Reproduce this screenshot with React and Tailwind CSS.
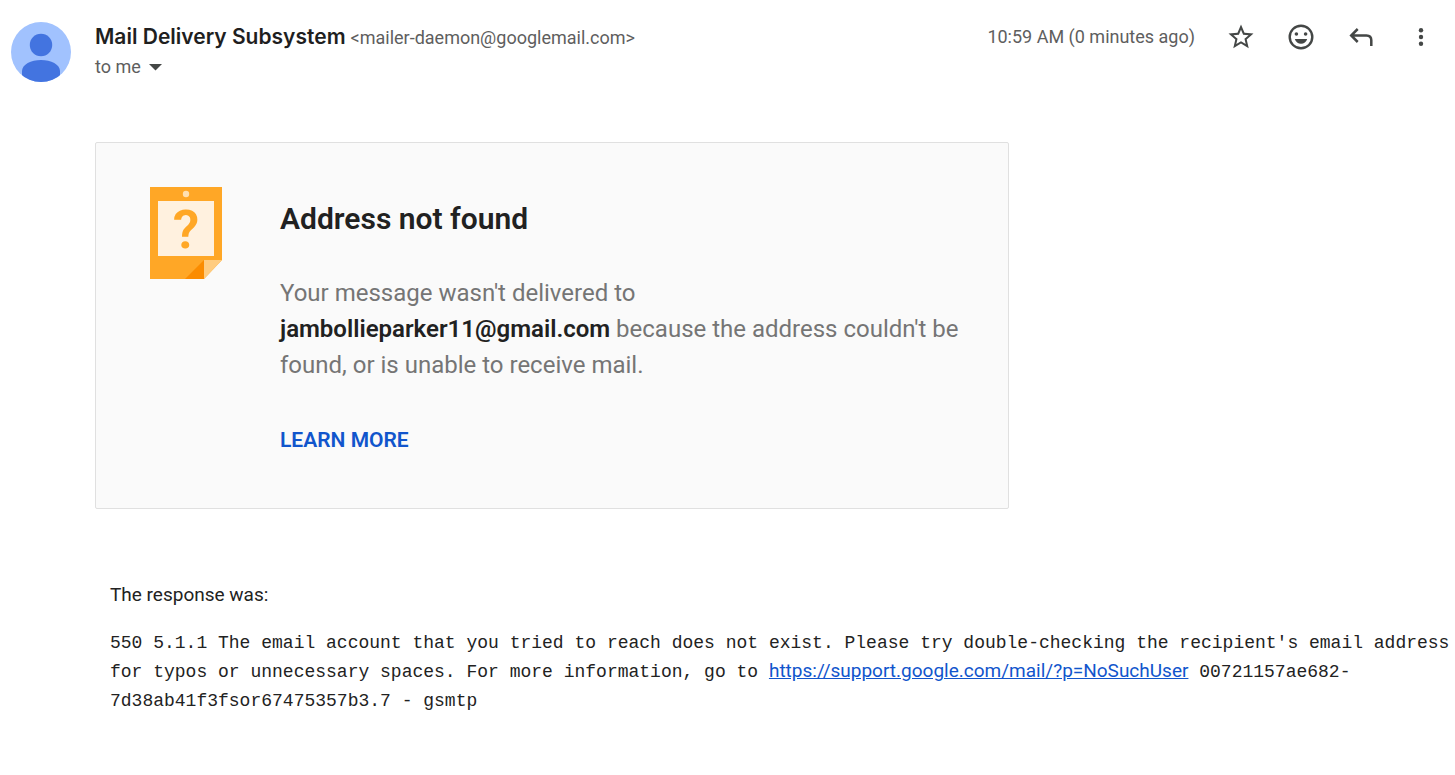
import React from 'react';
import { MdStarBorder } from 'react-icons/md';

const Avatar = () => (
  <svg className="w-15 h-15 shrink-0" viewBox="0 0 60 60" role="img" aria-label="Sender">
    <clipPath id="avatar-clip">
      <circle cx="30" cy="30" r="30" />
    </clipPath>
    <g clipPath="url(#avatar-clip)">
      <rect width="60" height="60" fill="#a1c2fe" />
      <circle cx="30" cy="23" r="11.2" fill="#4374e0" />
      <path d="M11 60V49c0-6.500 9-11 19-11s19 4.500 19 11v11z" fill="#4374e0" />
    </g>
  </svg>
);

const SmileIcon = () => (
  <svg width="30" height="30" viewBox="0 0 30 30" fill="#444746">
    <circle cx="15" cy="15" r="11.300" fill="none" stroke="#444746" strokeWidth="2.400" />
    <circle cx="10.400" cy="12" r="1.800" />
    <circle cx="19.600" cy="12" r="1.800" />
    <path d="M8.800 17H21.200C20.300 20 17.900 21.800 15 21.800S9.700 20 8.800 17z" />
  </svg>
);

const ReplyIcon = () => (
  <svg width="30" height="30" viewBox="0 0 30 30" fill="none" stroke="#444746" strokeWidth="2.500">
    <path d="M11.700 7L5.200 13.500L11.700 20M5.500 13.500H20.500Q25.300 13.500 25.300 18.300V24" />
  </svg>
);

const MoreIcon = () => (
  <svg width="30" height="30" viewBox="0 0 30 30" fill="#444746">
    <circle cx="15" cy="8.200" r="2.200" />
    <circle cx="15" cy="15" r="2.200" />
    <circle cx="15" cy="21.800" r="2.200" />
  </svg>
);

const NoteIcon = () => (
  <svg className="w-18 h-23 shrink-0" viewBox="0 0 72 92" aria-hidden="true">
    <path d="M0 0h72v73L54 92H0z" fill="#ffa726" />
    <rect x="8" y="14" width="56" height="55" fill="#fff1df" />
    <circle cx="36" cy="7" r="3.200" fill="#ffe0b2" />
    <path d="M54 73v19H35z" fill="#fb8c00" />
    <path d="M54 73h18L54 92z" fill="#ffcc80" />
    <text x="36" y="61" textAnchor="middle" className="font-[Roboto,sans-serif] text-[54px] font-semibold" fill="#ffa726">?</text>
  </svg>
);

const ActionButton = ({ label, children }) => (
  <button type="button" aria-label={label} className="w-15 h-[30px] flex items-center justify-center text-[#444746]">
    {children}
  </button>
);

const MessageHeader = () => (
  <header className="flex gap-6 pl-[11px] pr-1 pt-[22px]">
    <Avatar />
    <div className="flex-1 min-w-0">
      <div className="flex items-center justify-between gap-4 h-[30px]">
        <h1 className="flex flex-wrap items-baseline gap-x-[5px] text-[18px] leading-[30px] text-[#5e5e5e] font-normal">
          <span className="font-[Inter,sans-serif] text-[21px] font-semibold text-[#1f1f1f]">Mail Delivery Subsystem</span>
          <span>&lt;mailer-daemon@googlemail.com&gt;</span>
        </h1>
        <div className="flex items-center shrink-0">
          <time className="text-[18px] leading-7 text-[#5e5e5e] mr-4">10:59 AM (0 minutes ago)</time>
          <ActionButton label="Star"><MdStarBorder size={30} /></ActionButton>
          <ActionButton label="Add reaction"><SmileIcon /></ActionButton>
          <ActionButton label="Reply"><ReplyIcon /></ActionButton>
          <ActionButton label="More"><MoreIcon /></ActionButton>
        </div>
      </div>
      <button type="button" className="flex items-center gap-2 text-[18px] leading-[30px] text-[#5e5e5e]">
        to me
        <svg width="13" height="7" viewBox="0 0 13 7" fill="#444746" aria-hidden="true">
          <path d="M0 0h13L6.500 6.500z" />
        </svg>
      </button>
    </div>
  </header>
);

const BounceCard = () => (
  <section className="flex gap-[58px] max-w-[914px] border border-[#e0e0e0] rounded-xs bg-[#fafafa] pt-11 pb-[50px] pl-[54px] pr-10">
    <NoteIcon />
    <div>
      <h2 className="text-[30px] leading-9 font-semibold text-[#212121] mt-[14px]">Address not found</h2>
      <p className="text-[24px] leading-9 text-[#757575] mt-[38px]">
        Your message wasn't delivered to <b className="font-semibold text-[#212121]">jambollieparker11@gmail.com</b>{' '}
        because the address couldn't be found, or is unable to receive mail.
      </p>
      <a href="#learn-more" className="inline-block mt-[39px] text-[21px] leading-9 font-semibold text-[#1155cc]">LEARN MORE</a>
    </div>
  </section>
);

const App = () => {
  return (
    <main className="min-h-screen bg-white font-[Roboto,sans-serif]">
      <MessageHeader />
      <div className="pl-[95px] pt-15">
        <BounceCard />
        <div className="pl-[15px] pt-[71px] pb-15 text-[#222222]">
          <p className="text-[19px] leading-[29px]">The response was:</p>
          <p className="mt-5 text-[18px] leading-[29px] font-['Liberation_Mono',monospace]">
            550 5.1.1 The email account that you tried to reach does not exist. Please try double-checking the
            recipient's email address for typos or unnecessary spaces. For more information, go to{' '}
            <a
              href="https://support.google.com/mail/?p=NoSuchUser"
              className="text-[19px] leading-none font-[Roboto,sans-serif] text-[#1155cc] underline"
            >
              https://support.google.com/mail/?p=NoSuchUser
            </a>{' '}
            00721157ae682-7d38ab41f3fsor67475357b3.7 - gsmtp
          </p>
        </div>
      </div>
    </main>
  );
};

export default App;
